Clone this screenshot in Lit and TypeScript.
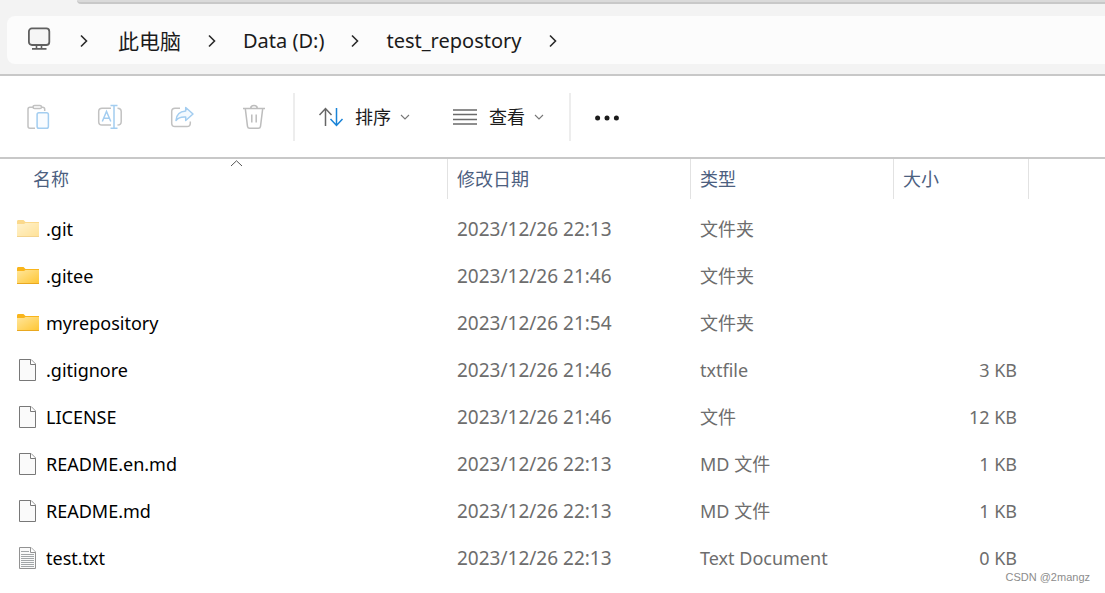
import { LitElement, html, css, svg, nothing } from "lit";
import { customElement, property } from "lit/decorators.js";

type Kind = "hidden-folder" | "folder" | "file" | "text";

interface Entry {
  kind: Kind;
  name: string;
  modified: string;
  type: string;
  size: string;
}

const ENTRIES: Entry[] = [
  { kind: "hidden-folder", name: ".git", modified: "2023/12/26 22:13", type: "文件夹", size: "" },
  { kind: "folder", name: ".gitee", modified: "2023/12/26 21:46", type: "文件夹", size: "" },
  { kind: "folder", name: "myrepository", modified: "2023/12/26 21:54", type: "文件夹", size: "" },
  { kind: "file", name: ".gitignore", modified: "2023/12/26 21:46", type: "txtfile", size: "3 KB" },
  { kind: "file", name: "LICENSE", modified: "2023/12/26 21:46", type: "文件", size: "12 KB" },
  { kind: "file", name: "README.en.md", modified: "2023/12/26 22:13", type: "MD 文件", size: "1 KB" },
  { kind: "file", name: "README.md", modified: "2023/12/26 22:13", type: "MD 文件", size: "1 KB" },
  { kind: "text", name: "test.txt", modified: "2023/12/26 22:13", type: "Text Document", size: "0 KB" },
];

const PATH = ["此电脑", "Data (D:)", "test_repostory"];

@customElement("file-icon")
class FileIcon extends LitElement {
  @property() kind: Kind = "file";

  static styles = css`
    :host { display: flex; width: 22px; height: 24px; }
    svg { display: block; }
    .faded { opacity: 0.5; }
  `;

  render() {
    if (this.kind === "folder" || this.kind === "hidden-folder") {
      return html`<svg class=${this.kind === "folder" ? "" : "faded"} width="22" height="24" viewBox="0 0 22 24" aria-hidden="true">
        <defs>
          <linearGradient id="g" x1="0" y1="0" x2="1" y2="1">
            <stop offset="0" stop-color="#ffe69c" /><stop offset="1" stop-color="#ffc633" />
          </linearGradient>
        </defs>
        <path d="M0 4.5Q0 3 1 3H6.5L8.500 5H22V12H0Z" fill="#f9b51c" />
        <path d="M0 7H7L8.500 6H22V19.500H0Z" fill="url(#g)" />
        <path d="M0 19H22V19.400Q22 20 21.400 20H.6Q0 20 0 19.400Z" fill="#e9a820" />
      </svg>`;
    }
    const text = this.kind === "text";
    return html`<svg width="22" height="24" viewBox="0 0 22 24" aria-hidden="true">
      <path d="M2.5 1.5H14L18.5 6V22.5H2.5Z" fill="#fafafa" stroke=${text ? "#929292" : "#787878"} />
      <path d="M13.5 1.5V6.5H18.5" fill="#fff" stroke=${text ? "#929292" : "#787878"} />
      ${text
        ? svg`<path d="M4 5.5H12M4 8.5H17M4 10.5H17M4 12.5H17M4 14.5H17M4 16.5H17M4 18.5H17M4 20.5H17" stroke="#a2a6a8" fill="none" />`
        : nothing}
    </svg>`;
  }
}

@customElement("address-bar")
class AddressBar extends LitElement {
  static styles = css`
    :host { display: block; background: #f3f3f3; border-bottom: 2px solid #c8c8c8; }
    .tabs { height: 4px; margin-left: 77px; box-sizing: border-box; background: #dadada;
      border-bottom: 2px solid #c8c8c8; border-bottom-left-radius: 4px; }
    .path { display: flex; align-items: center; height: 48px; box-sizing: border-box; margin: 12px 0 10px 7px;
      padding: 2px 0 0 20px; background: #fcfcfc; border-radius: 8px 0 0 8px; }
    ol { display: flex; align-items: center; list-style: none; margin: 0; padding: 0; }
    li { display: flex; align-items: center; }
    a { color: #1b1b1b; text-decoration: none; font-size: 20px; line-height: 28px; white-space: nowrap; }
    .cjk { font-size: 21px; }
    svg { display: block; flex: none; }
    .pc { margin-bottom: 2px; }
    .chev { margin: 0 26px; }
    .pc + .chev { margin: 0 29px 0 28px; }
  `;

  chevron() {
    return html`<svg class="chev" width="10" height="14" viewBox="0 0 10 14" aria-hidden="true">
      <path d="M2 1.5L7.5 7L2 12.5" fill="none" stroke="#2a2a2a" stroke-width="1.6" />
    </svg>`;
  }

  render() {
    return html`
      <div class="tabs"></div>
      <nav class="path" aria-label="路径">
        <svg class="pc" width="24" height="26" viewBox="0 0 24 26" aria-hidden="true">
          <g fill="none" stroke="#606060" stroke-width="1.8">
            <rect x="1.9" y="1.4" width="20.4" height="16.6" rx="3" fill="#f5f5f5" />
            <path d="M9.5 18V21.500M14.500 18V21.500M5 21.900H19.500" stroke-width="1.6" />
          </g>
        </svg>
        ${this.chevron()}
        <ol>
          ${PATH.map((p) => html`<li><a class=${/[\u4e00-\u9fff]/.test(p) ? "cjk" : ""} href="#">${p}</a>${this.chevron()}</li>`)}
        </ol>
      </nav>
    `;
  }
}

@customElement("command-bar")
class CommandBar extends LitElement {
  static styles = css`
    :host { display: flex; align-items: center; height: 81px; background: #fff; border-bottom: 2px solid #c8c8c8; }
    button { display: flex; align-items: center; border: 0; background: none; margin: 0; padding: 0;
      font: 18px/24px "Noto Sans", "Noto Sans CJK SC", sans-serif; color: #1b1b1b; white-space: nowrap; }
    .group { display: flex; align-items: center; gap: 46px; padding: 0 26px 0 25px; }
    .menus { display: flex; align-items: center; gap: 41px; padding: 0 24px 0 23px; }
    .menus button { gap: 11px; }
    .menus .down { margin-left: -3px; }
    .line { width: 2px; height: 48px; background: #ededed; }
    .more { padding-left: 24px; }
    svg { display: block; flex: none; }
  `;

  down() {
    return html`<svg class="down" width="12" height="8" viewBox="0 0 12 8" aria-hidden="true">
      <path d="M2 2L6 6L10 2" fill="none" stroke="#777" stroke-width="1.1" />
    </svg>`;
  }

  render() {
    return html`
      <div class="group">
        <button disabled aria-label="粘贴">
          <svg width="26" height="26" viewBox="0 0 26 26" fill="none" stroke="#c2c2c2" stroke-width="1.5">
            <path d="M9 3.2H5Q3 3.2 3 5.2V22.3Q3 24.3 5 24.3H10M16.500 3.200H17.500Q19.700 3.200 19.700 5.200V7" />
            <rect x="8" y="1.400" width="8.500" height="3.200" rx="1.600" />
            <rect x="12.100" y="8.700" width="11.300" height="15.600" rx="1.800" stroke="#a3cdf0" fill="#f9fcff" />
          </svg>
        </button>
        <button disabled aria-label="重命名">
          <svg width="26" height="26" viewBox="0 0 26 26" fill="none" stroke="#c2c2c2" stroke-width="1.500">
            <path d="M14 4.300H5Q1.700 4.300 1.700 7.600V17.700Q1.700 21 5 21H14M20.500 4.300Q24.200 4.300 24.200 7.600V17.700Q24.200 21 20.500 21" />
            <path d="M5.300 17.500L9.500 7.500L13.800 17.500M6.800 14.300H12.300M17 1.600V24.200M13.500 1.600H20.500M13.500 24.200H20.500" stroke="#a3cdf0" />
          </svg>
        </button>
        <button disabled aria-label="共享">
          <svg width="26" height="26" viewBox="0 0 26 26" fill="none" stroke="#c2c2c2" stroke-width="1.500">
            <path d="M11 4.200H6Q2.700 4.200 2.700 7.500V19.200Q2.700 22.500 6 22.500H18Q21.300 22.500 21.300 19.200V17.500" />
            <path d="M16.700 3.500L24 10L16.700 16.500V13.100C12 12.700 9.200 13.800 7 16.500C7.200 11 10.500 7.400 16.700 6.900Z" stroke="#a3cdf0" fill="#f3f9fe" stroke-linejoin="round" />
          </svg>
        </button>
        <button disabled aria-label="删除">
          <svg width="26" height="26" viewBox="0 0 26 26" fill="none" stroke="#bdbdbd" stroke-width="1.500">
            <path d="M2 4.600H24M4.300 4.600L6.500 22.300Q6.800 24.200 8.700 24.200H17.300Q19.200 24.200 19.500 22.300L21.700 4.600M9.700 4.500Q9.700 1.500 13 1.500Q16.300 1.500 16.300 4.500M10.800 10.500V18.500M15.200 10.500V18.500" />
          </svg>
        </button>
      </div>
      <span class="line"></span>
      <div class="menus">
        <button>
          <svg width="26" height="22" viewBox="0 0 26 22" fill="none" stroke-width="1.500">
            <path d="M7.500 20V2.500M1.500 9L7.500 2.500L13.500 9" stroke="#666" />
            <path d="M18.500 2V19.500M12.500 13L18.500 19.500L24.500 13" stroke="#1883d7" />
          </svg>
          <span>排序</span>${this.down()}
        </button>
        <button>
          <svg width="26" height="18" viewBox="0 0 26 18" aria-hidden="true">
            <path d="M1 2H25M1 6.500H25M1 11.500H25M1 16H25" stroke="#6a6a6a" stroke-width="1.500" />
          </svg>
          <span>查看</span>${this.down()}
        </button>
      </div>
      <span class="line"></span>
      <button class="more" aria-label="查看更多">
        <svg width="26" height="10" viewBox="0 0 26 10" fill="#1b1b1b">
          <circle cx="2.600" cy="6" r="2.500" /><circle cx="12" cy="6" r="2.500" /><circle cx="21.400" cy="6" r="2.500" />
        </svg>
      </button>
    `;
  }
}

@customElement("file-list")
class FileList extends LitElement {
  static styles = css`
    :host { display: block; }
    table { width: 100%; border-collapse: collapse; table-layout: fixed; }
    .c-name { width: 448px; }
    .c-date { width: 243px; }
    .c-type { width: 203px; }
    .c-size { width: 135px; }
    th { position: relative; height: 46px; padding: 0; text-align: left; vertical-align: top; }
    th button { display: block; width: 100%; height: 40px; margin: 0; padding: 0 0 0 9px; border: 0;
      border-right: 1px solid #e2e2e2; background: none; text-align: left; color: #4c607f;
      font: 18px/40px "Noto Sans", "Noto Sans CJK SC", sans-serif; }
    th:first-child button { padding-left: 33px; }
    .caret { position: absolute; left: 230px; top: 0; display: block; }
    td { height: 47px; padding: 0 0 0 9px; font-size: 18px; line-height: 24px; color: #6d6d6d; white-space: nowrap; }
    td.blank { height: 46px; }
    td.name { padding-left: 17px; color: #000; }
    td.date { font-size: 19px; }
    td.size { padding: 0 12px 0 0; text-align: right; }
    .label { display: flex; align-items: center; gap: 7px; }
  `;

  render() {
    return html`<table>
      <colgroup>
        <col class="c-name" /><col class="c-date" /><col class="c-type" /><col class="c-size" /><col />
      </colgroup>
      <thead>
        <tr>
          <th scope="col" aria-sort="ascending">
            <button>名称</button>
            <svg class="caret" width="13" height="9" viewBox="0 0 13 9" aria-hidden="true">
              <path d="M1 7L6.500 1.800L12 7" fill="none" stroke="#555" />
            </svg>
          </th>
          <th scope="col"><button>修改日期</button></th>
          <th scope="col"><button>类型</button></th>
          <th scope="col"><button>大小</button></th>
          <td class="blank"></td>
        </tr>
      </thead>
      <tbody>
        ${ENTRIES.map((e) => html`<tr>
          <td class="name"><span class="label"><file-icon .kind=${e.kind}></file-icon>${e.name}</span></td>
          <td class="date">${e.modified}</td>
          <td>${e.type}</td>
          <td class="size">${e.size}</td>
          <td></td>
        </tr>`)}
      </tbody>
    </table>`;
  }
}

@customElement("app-root")
class AppRoot extends LitElement {
  static styles = css`
    :host { display: block; position: relative; min-height: 100vh; background: #fff; overflow: hidden;
      font-family: "Noto Sans", "Noto Sans CJK SC", sans-serif; }
    .mark { position: absolute; right: 15px; bottom: 9px; font: 11px/14px "Liberation Sans", sans-serif; color: #8c8c8c; }
  `;

  render() {
    return html`
      <address-bar></address-bar>
      <command-bar></command-bar>
      <file-list></file-list>
      <span class="mark">CSDN @2mangz</span>
    `;
  }
}
